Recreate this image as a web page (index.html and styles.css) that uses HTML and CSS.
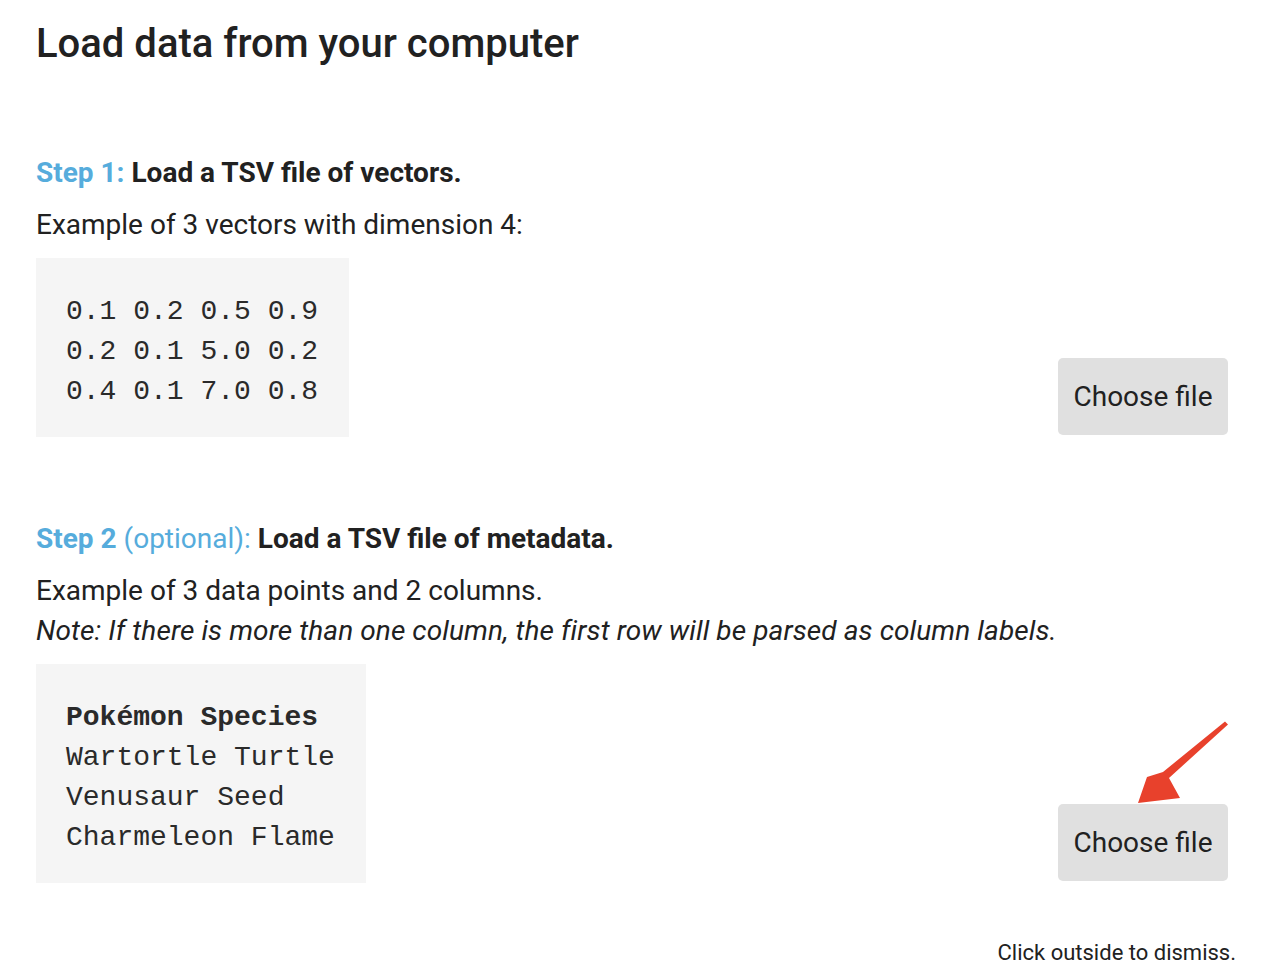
FILE: index.html
```html
<!DOCTYPE html>
<html>
<head>
<meta charset="utf-8">
<link rel="stylesheet" href="styles.css">
</head>
<body>
<div class="dialog">
  <h1 class="title">Load data from your computer</h1>

  <section class="step step-1">
    <div class="step-info">
      <h2 class="step-heading"><span class="step-label">Step 1:</span> Load a TSV file of vectors.</h2>
      <p class="step-text">Example of 3 vectors with dimension 4:</p>
      <pre class="code-block">0.1 0.2 0.5 0.9
0.2 0.1 5.0 0.2
0.4 0.1 7.0 0.8</pre>
    </div>
    <button class="file-button">Choose file</button>
  </section>

  <section class="step step-2">
    <div class="step-info">
      <h2 class="step-heading"><span class="step-label">Step 2</span> <span class="step-optional">(optional):</span> Load a TSV file of metadata.</h2>
      <p class="step-text">Example of 3 data points and 2 columns.<br><em>Note: If there is more than one column, the first row will be parsed as column labels.</em></p>
      <pre class="code-block"><b>Pokémon Species</b>
Wartortle Turtle
Venusaur Seed
Charmeleon Flame</pre>
    </div>
    <div class="button-wrap">
      <button class="file-button">Choose file</button>
      <svg class="arrow" width="100" height="90" viewBox="0 0 100 90">
        <polygon fill="#e8412c" points="87,1.5 90,4.5 31,58 42,78 0,83 9,57 25,52"/>
      </svg>
    </div>
  </section>

  <p class="dismiss">Click outside to dismiss.</p>
</div>
</body>
</html>
```

FILE: styles.css
```css
html, body {
  margin: 0;
  padding: 0;
  background: #ffffff;
}

.dialog {
  font-family: Roboto, "Liberation Sans", sans-serif;
  color: #212121;
  padding: 20px 44px 0 36px;
}

.title {
  margin: 0;
  font-size: 40px;
  font-weight: 500;
  line-height: 48px;
}

.step {
  display: flex;
  align-items: flex-end;
  justify-content: space-between;
}

.step-1 {
  margin-top: 87px;
}

.step-2 {
  margin-top: 84px;
}

.step-heading {
  margin: 0;
  font-size: 28px;
  font-weight: 700;
  line-height: 36px;
}

.step-label {
  color: #56acdc;
}

.step-optional {
  color: #56acdc;
  font-weight: 400;
}

.step-text {
  margin: 14px 0 0;
  font-size: 28px;
  line-height: 40px;
}

.step-text em {
  font-style: italic;
  letter-spacing: 0.1px;
}

.code-block {
  margin: 13px 0 0;
  background: #f5f5f5;
  padding: 34px 31px 25px 30px;
  font-family: "Liberation Mono", "Courier New", monospace;
  font-size: 28px;
  line-height: 40px;
  color: #2a2a2a;
  display: inline-block;
}

.code-block b {
  font-weight: 700;
}

.file-button {
  font-family: Roboto, "Liberation Sans", sans-serif;
  font-size: 28px;
  color: #212121;
  background: #e0e0e0;
  border: none;
  border-radius: 5px;
  width: 170px;
  height: 77px;
  padding: 0;
  margin-bottom: 2px;
}

.button-wrap {
  position: relative;
  display: flex;
}

.arrow {
  position: absolute;
  left: 80px;
  top: -84px;
}

.dismiss {
  margin: 56px -8px 0 0;
  text-align: right;
  font-size: 22px;
  line-height: 28px;
}
```
